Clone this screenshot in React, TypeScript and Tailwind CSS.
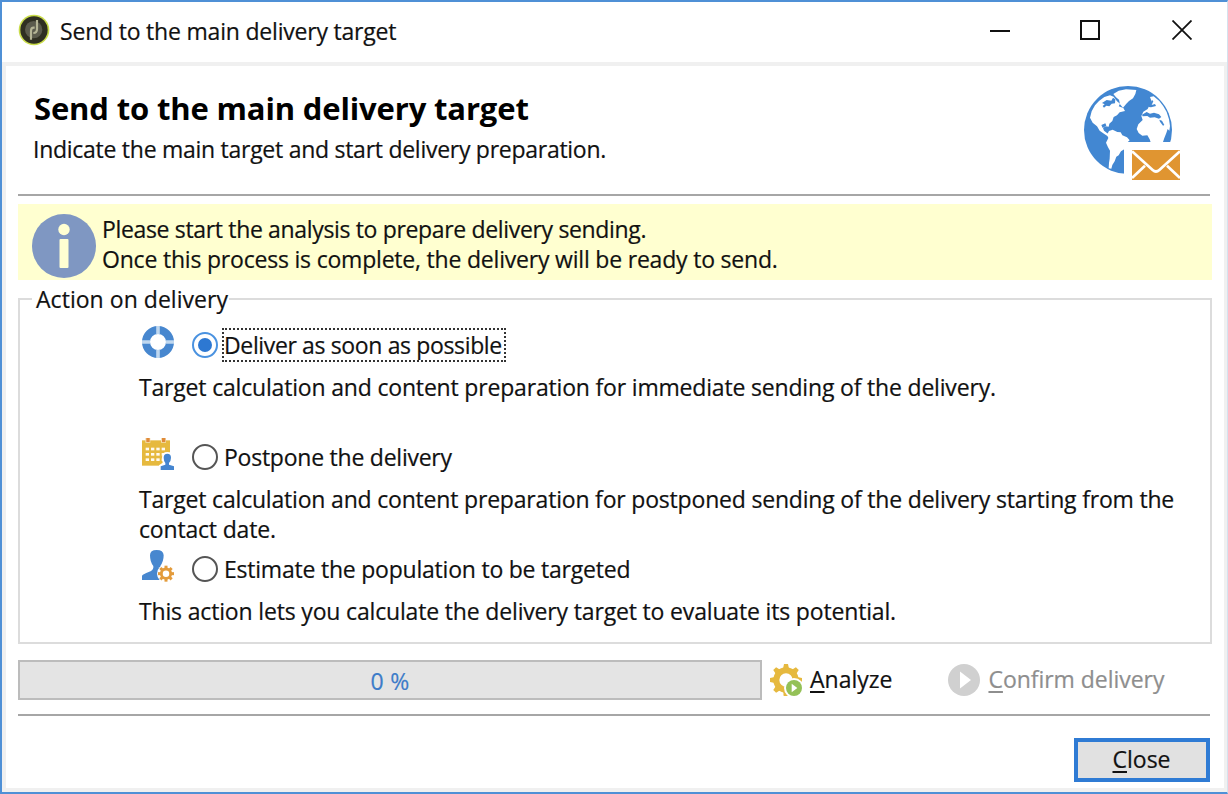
import type { ReactNode } from "react";

function AppLogo() {
  return (
    <svg className="h-8 w-8 shrink-0" viewBox="54 42 96 96" fill="none">
      <circle cx="102" cy="90" r="46" fill="#c9dc4a" />
      <circle cx="102" cy="90" r="41" fill="#2f2f22" />
      <circle cx="101" cy="89" r="26" fill="#5b5b4d" />
      <path d="M93 119V93q0-10 8-10h3M111 60v27q0 12-11 12" stroke="#b5b596" strokeWidth="6.5" />
    </svg>
  );
}

function GlobeMail() {
  return (
    <svg className="mt-[9px] h-[115px] w-[120px] shrink-0" viewBox="0 0 360 345">
      <circle cx="174" cy="165" r="132" fill="#4287d2" />
      <g fill="#fff">
        <path d="M130 57l16-10 22-4 31 2-3 12-7 13-12 8-8 8-10 12-9-10-3-14-9-7z" />
        <path d="M60 128l5-19 10-18 12-13 16-12 17-5 11 4 10 14 9 7-4 8 14 5 5 9-16 4-8 9-10 5-4 12-9 8-2 9-9-1-8 5 3 8 9 7 9 7-3 5-13-8-15-11-8-13-13-11z" />
        <path d="M117 168l11-4 14 7 10 1 5 9 14 6 8 9-9 8-5 17-12 8-7 12-7 4-5 14-7 11-3 11-8-1 1-16 2-13 1-24-6-10-6-14 7-14-4-10z" />
        <path d="M240 66l11-2 17 14 12 16 10 17 7 22 3 20-2 14-5-5-4 12-6 15-5 15-35 1-4-12-7-12-15 1-11-8-6-12 5-14 13-13-4-12 6-13 13-8 4-8 9-10-2-7z" />
      </g>
      <g fill="#4287d2">
        <path d="M96 84l14-9 14 2 5-9 7 5-1 12-10 1-7 8-9-2-7 6-4-5 6-5zM216 119l14-8 10 5 12-3 15 5 7 8-7 5-13-4-14 1-8-5-14 1zM94 150l12-5 3 7-11 7zM234 91l8-8 4-8 4 4-5 11 10-3 3 6-15 4-7-1zM268 134l8 3 7 13-4 2-9-12z" />
      </g>
      <path d="M162 201h150v104H162z" fill="#fff" />
      <path d="M186 225h144v90H186z" fill="#e09531" />
      <path d="M186 229l62 56q10 9 20 0l62-56M186 309l39-37M330 309l-39-37" fill="none" stroke="#fff" strokeWidth="8" />
    </svg>
  );
}

function InfoIcon() {
  return (
    <svg className="h-16 w-16 shrink-0" viewBox="0 0 64 64">
      <circle cx="32" cy="32" r="32" fill="#7f97c2" />
      <circle cx="32" cy="15.5" r="5.7" fill="#ffffd2" />
      <rect x="27.5" y="25" width="9" height="29" rx="1" fill="#ffffd2" />
    </svg>
  );
}

function RingIcon() {
  return (
    <svg className="h-8 w-8" viewBox="0 0 32 32" fill="none">
      <circle cx="16" cy="16" r="12" stroke="#4787cf" strokeWidth="8" />
      <path d="M16 0v8M16 24v8M0 16h8M24 16h8" stroke="#bfd7ef" strokeWidth="3.6" />
    </svg>
  );
}

const cellColumns = [77, 93, 109, 125];
const cellRows = [413, 429, 445];

function CalendarIcon() {
  return (
    <svg className="h-8 w-8" viewBox="66 384 96 96">
      <path d="M66 391h84v76H66z" fill="#e6b93e" />
      <path d="M76 384h15v14H76zM123 384h15v14h-15z" fill="#f5dfb4" />
      <path d="M79 384h10v12H79zM126 384h10v12h-10z" fill="#e08a3a" />
      {cellRows.map((y) =>
        cellColumns.map((x) => <rect key={`${x}-${y}`} x={x} y={y} width="10" height="8" fill="#fffaf0" />),
      )}
      <path d="M126 442q0-16 16-16t16 16q0 9-5 16l12 8v16h-48v-16l11-8q-2-5-2-16z" fill="#fff" />
      <path d="M131 443q0-12 11-12t11 12q0 9-6 16v5l15 5v11h-40v-11l14-5v-5q-5-7-5-16z" fill="#4485d0" />
    </svg>
  );
}

const eightTurns = [0, 45, 90, 135, 180, 225, 270, 315];

function PersonGearIcon() {
  return (
    <svg className="h-8 w-8" viewBox="66 60 96 96">
      <path d="M90 76q0-16 20-16t21 16q0 18-10 32v10l10 32H66v-13q4-5 20-11 13-5 14-13v-5q-10-12-10-32z" fill="#4787cf" />
      <circle cx="138" cy="131" r="27" fill="#fff" />
      <circle cx="138" cy="131" r="14" fill="none" stroke="#e39b3b" strokeWidth="8.5" />
      {eightTurns.map((a) => (
        <rect key={a} x="133.5" y="107" width="9" height="9" fill="#e39b3b" transform={`rotate(${a} 138 131)`} />
      ))}
    </svg>
  );
}

function AnalyzeIcon() {
  return (
    <svg className="h-8 w-8" viewBox="90 72 96 96">
      <circle cx="138" cy="120" r="29" fill="none" stroke="#e6b93f" strokeWidth="18" />
      {eightTurns.map((a) => (
        <path key={a} d="M129 86l3-14h12l3 14z" fill="#e6b93f" transform={`rotate(${a} 138 120)`} />
      ))}
      <circle cx="162" cy="144" r="30" fill="#fff" />
      <path d="M178 115h8v5h-6zM131 162h6v6h-6z" fill="#e6b93f" />
      <circle cx="162" cy="144" r="24" fill="#94c157" />
      <path d="M155 131l17 13-17 13z" fill="#fff" />
    </svg>
  );
}

function PlayIcon() {
  return (
    <svg className="h-8 w-8" viewBox="0 0 32 32">
      <circle cx="16" cy="16" r="16" fill="#d0d0d0" />
      <path d="M12 7.5L23 16l-11 8.5z" fill="#fff" />
    </svg>
  );
}

function Radio({ checked }: { checked?: boolean }) {
  return (
    <span
      className={
        checked
          ? "flex h-[26px] w-[26px] items-center justify-center rounded-full border-2 border-[#4a92e0]"
          : "flex h-[26px] w-[26px] items-center justify-center rounded-full border-2 border-[#555]"
      }
    >
      {checked && <span className="h-[14px] w-[14px] rounded-full bg-[#2d78d2]" />}
    </span>
  );
}

function Option({ icon, checked, label, children }: { icon: ReactNode; checked?: boolean; label: ReactNode; children: ReactNode }) {
  return (
    <div className="h-28">
      <div className="flex h-[30px] items-center">
        <span className="-mt-[6px] ml-[122px] mr-[18px]">{icon}</span>
        <Radio checked={checked} />
        {label}
      </div>
      <div className="ml-[119px] mt-3">{children}</div>
    </div>
  );
}

export default function App() {
  return (
    <div className="flex h-[794px] w-[1228px] flex-col whitespace-nowrap border-y-2 border-l-2 border-r border-y-[#4f90d6] border-l-[#4f90d6] border-r-[#d5e2ee] bg-white font-['Open_Sans',sans-serif] text-[23px] leading-[30px] text-[#111] [-webkit-text-stroke:0.2px]">
      <header className="flex h-[60px] shrink-0 items-start">
        <div className="ml-4 mt-3"><AppLogo /></div>
        <span className="ml-[10px] mt-[14px] tracking-[-0.2px]">Send to the main delivery target</span>
        <div className="ml-auto mr-[35px] mt-[18px] flex">
          <svg className="mr-[70px] h-5 w-5" viewBox="0 0 20 20"><path d="M0 11h20" stroke="#111" strokeWidth="2" /></svg>
          <svg className="mr-[72px] h-5 w-5" viewBox="0 0 20 20"><path d="M1 1h18v18H1z" fill="none" stroke="#111" strokeWidth="2" /></svg>
          <svg className="h-5 w-5" viewBox="0 0 20 20"><path d="M.5.5l19 19M19.5.5l-19 19" stroke="#111" strokeWidth="1.8" /></svg>
        </div>
      </header>

      <main className="flex min-h-0 grow flex-col border-x-4 border-y-4 border-r-[3px] border-[#f0f0f0] pl-3">
        <div className="flex h-32 shrink-0 justify-between pr-[34px]">
          <div className="pl-[15px]">
            <h1 className="mt-[22px] h-[40px] pl-px text-[31px] font-bold leading-[40px] tracking-[-0.15px] text-black [-webkit-text-stroke:0px]">Send to the main delivery target</h1>
            <p className="mt-[6px] tracking-[-0.27px]">Indicate the main target and start delivery preparation.</p>
          </div>
          <GlobeMail />
        </div>
        <div className="h-[2px] w-[1192px] shrink-0 bg-[#a6a6a6]" />

        <div className="mt-2 flex h-[76px] w-[1194px] shrink-0 items-start bg-[#ffffd0] pl-[14px] pt-[10px]">
          <InfoIcon />
          <div className="ml-[6px]">
            <p className="tracking-[-0.34px]">Please start the analysis to prepare delivery sending.</p>
            <p className="tracking-[-0.2px]">Once this process is complete, the delivery will be ready to send.</p>
          </div>
        </div>

        <section className="mt-[18px] h-[346px] w-[1194px] shrink-0 border-2 border-[#dcdcdc]">
          <h2 className="-mt-4 mb-4 ml-[12px] h-[30px] w-[197px] bg-white pl-1 tracking-[0.04px]">Action on delivery</h2>
          <Option
            icon={<RingIcon />}
            checked
            label={<span className="ml-1 border-2 border-dotted border-[#333] pr-[2px] tracking-[-0.36px]">Deliver as soon as possible</span>}
          >
            <p className="tracking-[-0.18px]">Target calculation and content preparation for immediate sending of the delivery.</p>
          </Option>
          <Option icon={<CalendarIcon />} label={<span className="ml-[6px] tracking-[-0.24px]">Postpone the delivery</span>}>
            <p className="tracking-[-0.19px]">Target calculation and content preparation for postponed sending of the delivery starting from the</p>
            <p className="tracking-[-0.18px]">contact date.</p>
          </Option>
          <Option icon={<PersonGearIcon />} label={<span className="ml-[6px] tracking-[-0.22px]">Estimate the population to be targeted</span>}>
            <p className="tracking-[-0.165px]">This action lets you calculate the delivery target to evaluate its potential.</p>
          </Option>
        </section>

        <div className="mt-4 flex h-10 shrink-0 items-center">
          <div className="flex h-10 w-[744px] items-center justify-center border-2 border-[#bcbcbc] bg-[#e4e4e4] pt-[2px] tracking-[0.3px] text-[#3d7cc9]">0 %</div>
          <button className="ml-2 flex items-center">
            <AnalyzeIcon />
            <span className="-mt-[2px] ml-2"><span className="underline decoration-2 underline-offset-[3px]">A</span>nalyze</span>
          </button>
          <button className="ml-[56px] flex items-center text-[#8e8e8e]">
            <PlayIcon />
            <span className="-mt-[2px] ml-2 tracking-[-0.04px]"><span className="underline decoration-2 underline-offset-[3px]">C</span>onfirm delivery</span>
          </button>
        </div>
        <div className="mt-[14px] h-[2px] w-[1192px] shrink-0 bg-[#a6a6a6]" />
        <button className="ml-[1056px] mt-[22px] h-11 w-[136px] shrink-0 border-4 border-[#2f7bd4] bg-[#e1e1e1] pb-[2px] pr-px">
          <span className="underline decoration-2 underline-offset-[3px]">C</span>lose
        </button>
      </main>
    </div>
  );
}
